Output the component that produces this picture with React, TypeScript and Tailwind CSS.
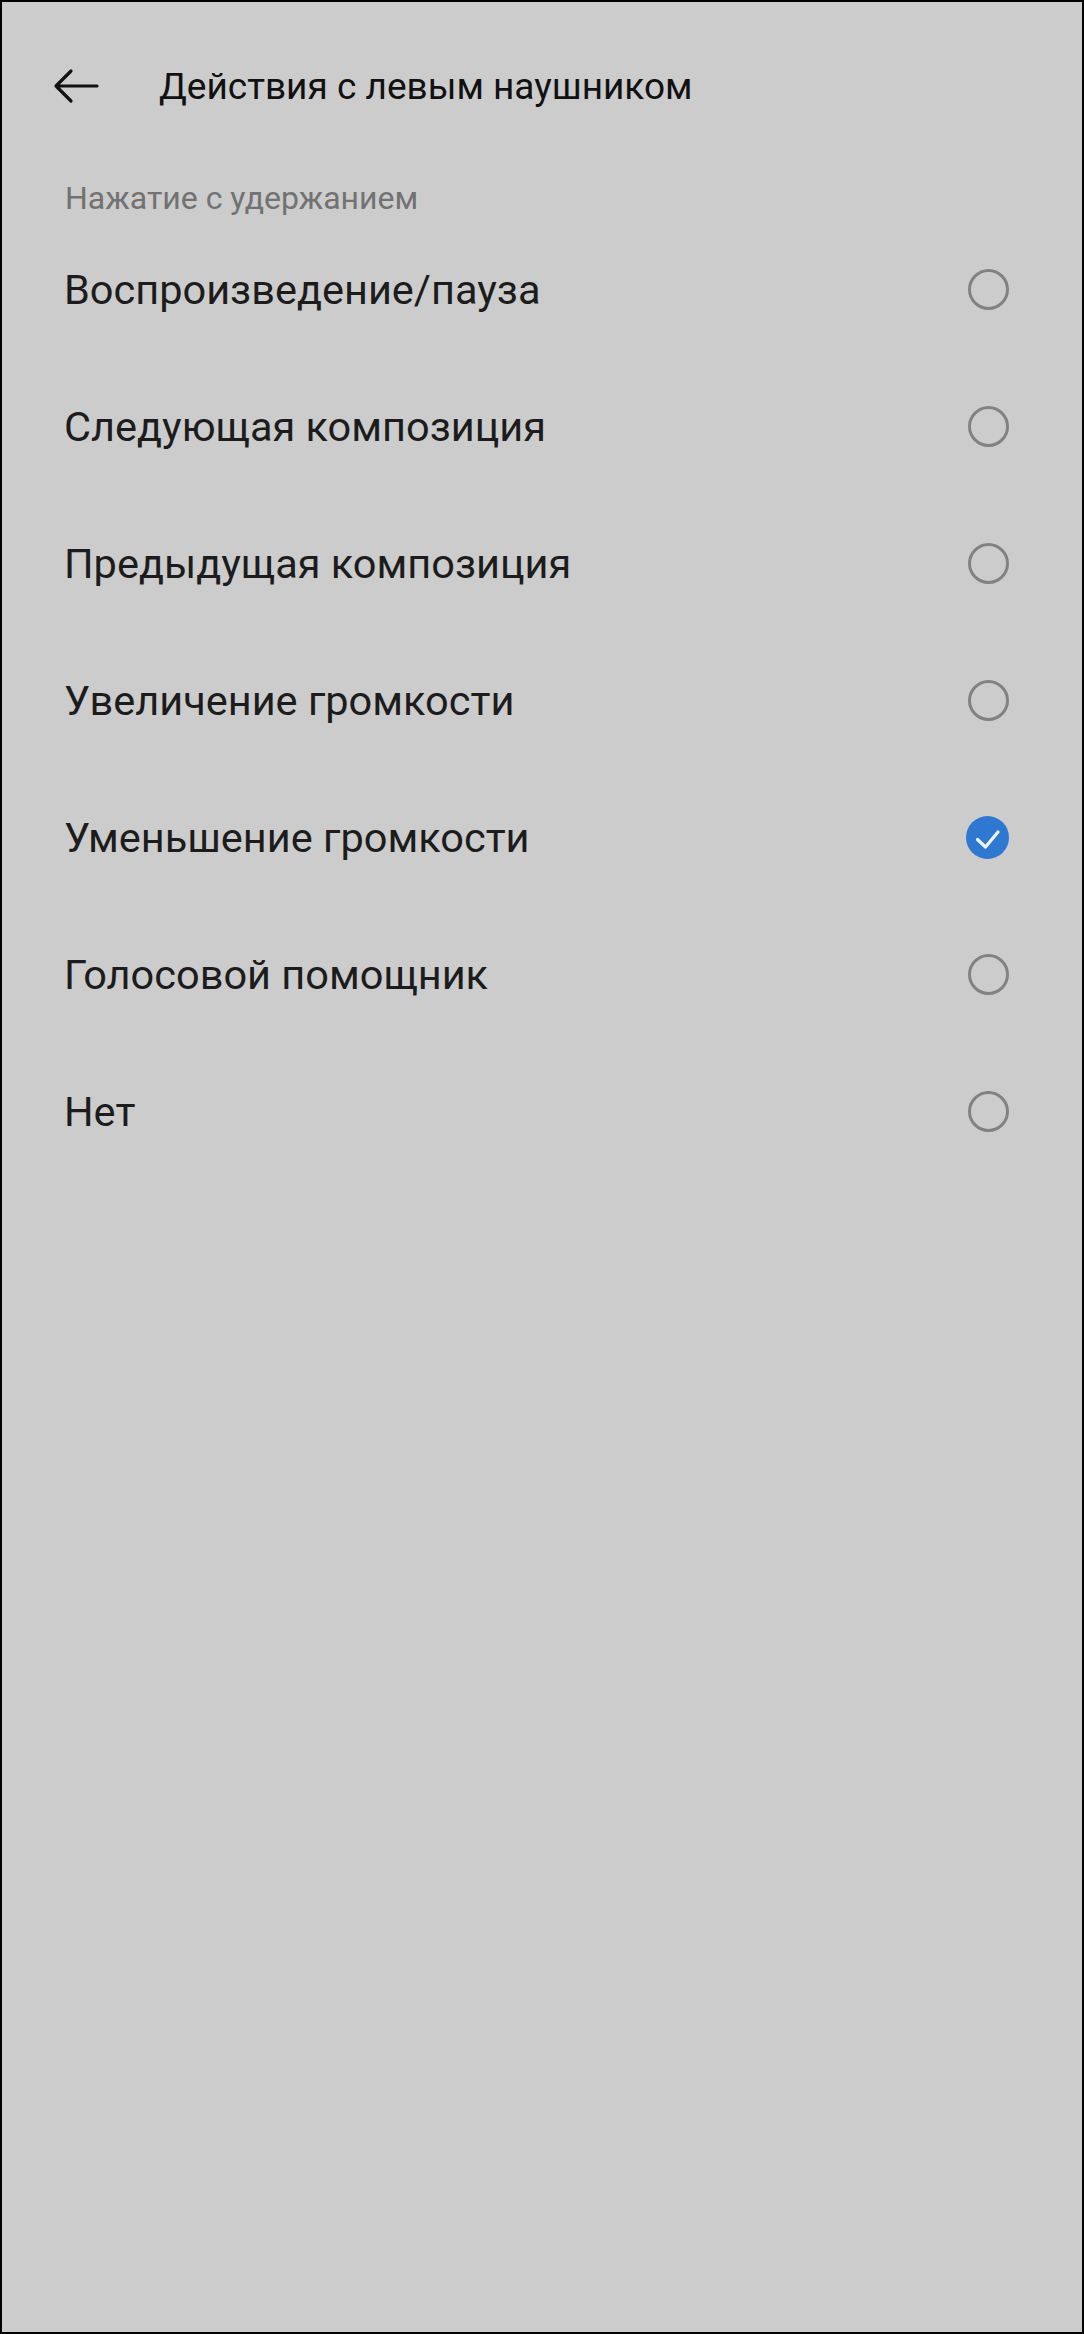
const options = [
	'Воспроизведение/пауза',
	'Следующая композиция',
	'Предыдущая композиция',
	'Увеличение громкости',
	'Уменьшение громкости',
	'Голосовой помощник',
	'Нет',
];

const selected = 'Уменьшение громкости';

const Radio = ({ checked }: { checked: boolean }) =>
	checked ? (
		<svg width="43" height="43" viewBox="0 0 43 43" fill="none">
			<circle cx="21.5" cy="21.5" r="21.5" fill="#2f78d2" />
			<path d="M11.5 23.5l8 7.5 12.5-15" stroke="#eef3fb" strokeWidth="3.2" strokeLinecap="round" strokeLinejoin="round" />
		</svg>
	) : (
		<span className="block h-[41px] w-[41px] rounded-full border-[3px] border-[#828282]" />
	);

const BackArrow = () => (
	<svg width="46" height="36" viewBox="0 0 46 36" fill="none">
		<path d="M3 18h41M18 3L3 18l15 15" stroke="#111" strokeWidth="3.2" strokeLinecap="round" strokeLinejoin="round" />
	</svg>
);

const App = () => {
	return (
		<div className="h-[2334px] w-full border-2 border-black bg-[#cccccc] font-['Roboto',sans-serif]">
			<div className="flex h-[168px] items-center pl-[51px]">
				<BackArrow />
				<h1 className="ml-[60px] text-[37px] leading-none text-[#111]">Действия с левым наушником</h1>
			</div>
			<div className="flex h-[51px] items-center pl-[63px] pt-[5px] text-[32px] leading-none text-[#727272]">Нажатие с удержанием</div>
			<ul>
				{options.map((option) => (
					<li className="flex h-[137px] items-center justify-between pl-[62px] pr-[73px]" key={option}>
						<span className="text-[41.5px] leading-none text-[#1c1c1c]">{option}</span>
						<Radio checked={option === selected} />
					</li>
				))}
			</ul>
		</div>
	);
};

export default App;
